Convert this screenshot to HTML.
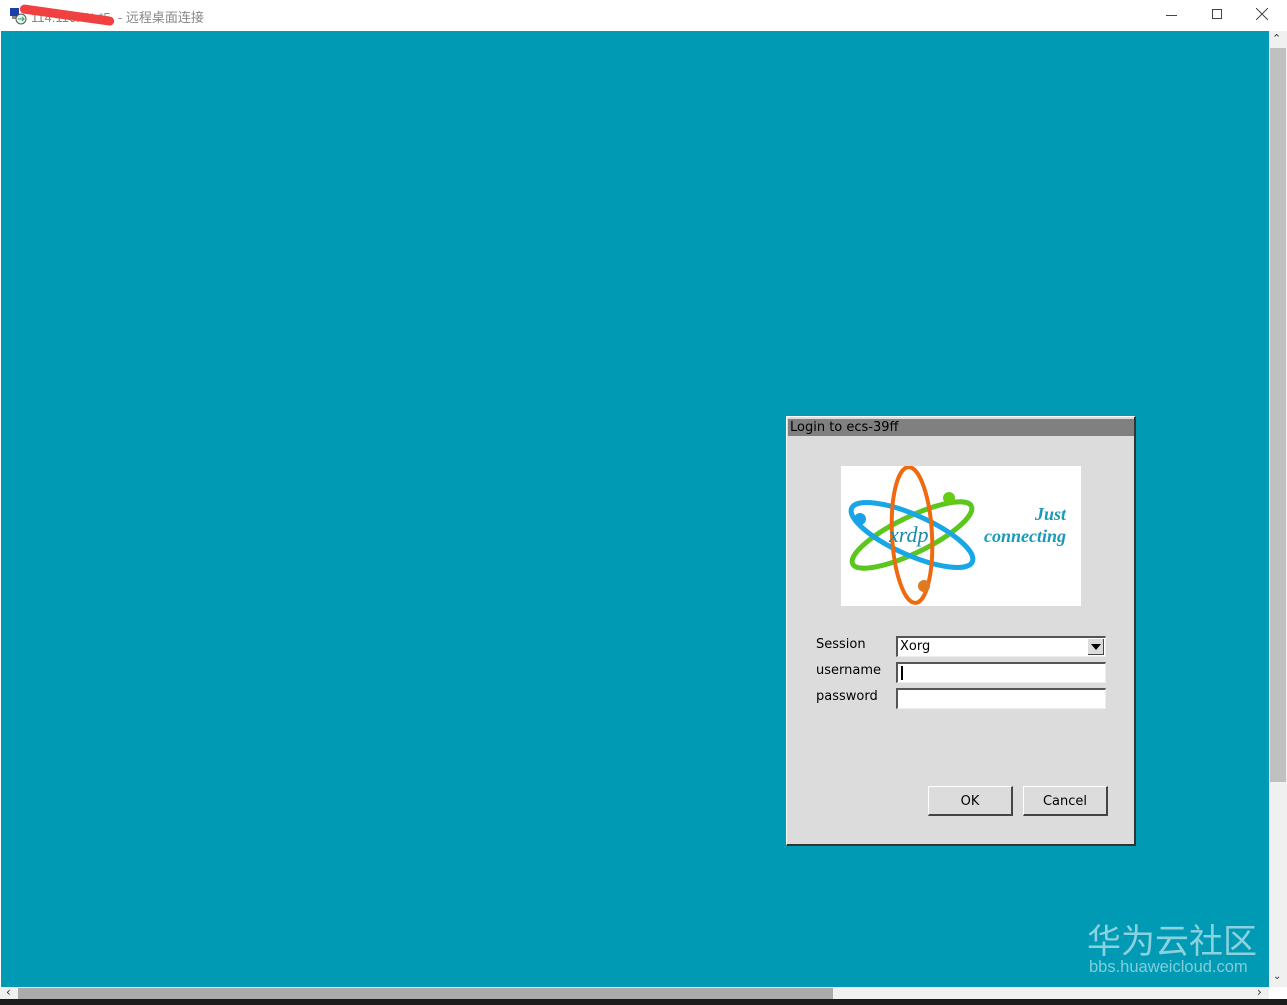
<!DOCTYPE html>
<html><head><meta charset="utf-8"><style>
*{margin:0;padding:0;box-sizing:border-box}
body{width:1287px;height:1005px;overflow:hidden;background:#fff;position:relative;font-family:"DejaVu Sans","Liberation Sans",sans-serif}
.abs{position:absolute}
#title{left:0;top:0;width:1287px;height:31px;background:#fff}
#desk{left:1px;top:31px;width:1268px;height:956px;background:#009ab5}
.lbl{font-size:13px;color:#000}
.inp{background:#fff;border-top:2px solid #555;border-left:2px solid #555;border-right:1px solid #eee;border-bottom:1px solid #eee}
.btn{background:#dcdcdc;border-top:1px solid #fff;border-left:1px solid #fff;border-right:2px solid #444;border-bottom:2px solid #444;font-size:13px;text-align:center;line-height:30px}
</style></head><body>
<div id="title" class="abs">
  <svg class="abs" style="left:9px;top:7px" width="18" height="18"><rect x="1" y="1" width="9" height="8" fill="#1a3fa8"/><rect x="3" y="9" width="6" height="3" fill="#888"/><circle cx="12" cy="12" r="5" fill="#e8f4e8" stroke="#555"/><path d="M9 12h6M13 10l2 2-2 2" stroke="#2a7" fill="none"/></svg>
  <div class="abs" style="left:31px;top:7px;font-size:13px;color:#888;font-family:'Liberation Sans','Noto Sans CJK SC',sans-serif">114.116.***.*5&nbsp; - 远程桌面连接</div>
  <div class="abs" style="left:20px;top:4px;width:95px;height:9px;background:#f04040;border-radius:5px;transform:rotate(8deg);transform-origin:left center"></div>
  <div class="abs" style="left:1166px;top:15px;width:11px;height:1px;background:#444"></div>
  <div class="abs" style="left:1212px;top:9px;width:10px;height:10px;border:1px solid #444"></div>
  <svg class="abs" style="left:1256px;top:8px" width="12" height="12"><path d="M0 0L12 12M12 0L0 12" stroke="#444"/></svg>
</div>
<div id="desk" class="abs"></div>
<div class="abs" style="left:1269px;top:31px;width:18px;height:956px;background:#f0f0f0"></div>
<div class="abs" style="left:1270px;top:48px;width:16px;height:734px;background:#c0c0c0"></div>
<div class="abs" style="left:1272px;top:32px;font-size:11px;color:#333">⌃</div>
<div class="abs" style="left:1273px;top:971px;font-size:10px;color:#333">⌄</div>
<div class="abs" style="left:0;top:987px;width:1269px;height:12px;background:#f0f0f0"></div>
<div class="abs" style="left:18px;top:988px;width:815px;height:11px;background:#ababab"></div>
<div class="abs" style="left:6px;top:985px;font-size:12px;color:#333">‹</div>
<div class="abs" style="left:1257px;top:985px;font-size:12px;color:#333">›</div>
<div class="abs" style="left:0;top:999px;width:1287px;height:6px;background:#1c1c1c"></div>

<div class="abs" style="left:786px;top:416px;width:350px;height:430px;background:#dcdcdc;border-top:1px solid #fff;border-left:1px solid #fff;border-right:2px solid #333;border-bottom:2px solid #333"></div>
<div class="abs" style="left:788px;top:419px;width:346px;height:17px;background:#808080;font-size:13px;line-height:18px;padding-left:2px;color:#000">Login to ecs-39ff</div>
<div class="abs" style="left:841px;top:466px;width:240px;height:140px;background:#fff;overflow:hidden">
<svg width="240" height="140">
  <g transform="translate(71,69)">
    <ellipse rx="66" ry="18" transform="rotate(-26)" fill="none" stroke="#5bc61d" stroke-width="5"/>
    <ellipse rx="66" ry="20" transform="rotate(24)" fill="none" stroke="#19a6e6" stroke-width="5"/>
    <ellipse rx="20" ry="68" transform="rotate(-3)" fill="none" stroke="#ee6a10" stroke-width="4"/>
    <circle cx="37" cy="-37" r="6" fill="#66cc11"/>
    <circle cx="-52" cy="-16" r="6" fill="#1aa0e8"/>
    <circle cx="12" cy="51" r="6" fill="#e07a20"/>
  </g>
  <text x="48" y="76" font-family="Liberation Serif,serif" font-style="italic" font-size="22" fill="#1a8aa8">xrdp</text>
  <text x="225" y="54" text-anchor="end" font-family="Liberation Serif,serif" font-style="italic" font-weight="bold" font-size="18" fill="#1a9ab8">Just</text>
  <text x="225" y="76" text-anchor="end" font-family="Liberation Serif,serif" font-style="italic" font-weight="bold" font-size="18" fill="#1a9ab8">connecting</text>
</svg></div>
<div class="abs lbl" style="left:816px;top:637px">Session</div>
<div class="abs lbl" style="left:816px;top:663px">username</div>
<div class="abs lbl" style="left:816px;top:689px">password</div>
<div class="abs inp" style="left:896px;top:636px;width:210px;height:21px"><span style="position:absolute;left:2px;top:1px;font-size:13px">Xorg</span>
  <div style="position:absolute;right:1px;top:1px;width:16px;height:16px;background:#dcdcdc;border-right:1px solid #444;border-bottom:1px solid #444"><div style="margin:5px 0 0 3px;width:0;height:0;border-left:5px solid transparent;border-right:5px solid transparent;border-top:6px solid #000"></div></div></div>
<div class="abs inp" style="left:896px;top:662px;width:210px;height:21px"><div style="position:absolute;left:3px;top:2px;width:2px;height:14px;background:#000"></div></div>
<div class="abs inp" style="left:896px;top:688px;width:210px;height:21px"></div>
<div class="abs btn" style="left:928px;top:786px;width:85px;height:30px">OK</div>
<div class="abs btn" style="left:1023px;top:786px;width:85px;height:30px">Cancel</div>

<div class="abs" style="left:1087px;top:918px;font-size:34px;color:rgba(255,255,255,0.55);font-family:'Noto Sans CJK SC',sans-serif;line-height:42px">华为云社区</div>
<div class="abs" style="left:1089px;top:958px;font-size:16.5px;color:rgba(255,255,255,0.5);font-family:'Liberation Sans',sans-serif">bbs.huaweicloud.com</div>
</body></html>
